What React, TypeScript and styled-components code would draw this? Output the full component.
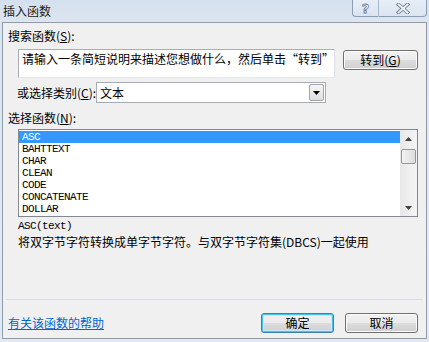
import React from 'react';
import styled, { createGlobalStyle, css } from 'styled-components';

const cjk = `"Noto Sans CJK SC", "Liberation Sans", sans-serif`;
const mono = `"Liberation Mono", "Noto Sans CJK SC", monospace`;

const GlobalStyle = createGlobalStyle`
    html, body {
        margin: 0;
        padding: 0;
        overflow: hidden;
    }
    body {
        font-family: ${cjk};
        font-size: 12px;
        color: #000;
    }
`;

const Window = styled.div`
    width: 429px;
    height: 342px;
    box-sizing: border-box;
    padding: 0 2px 3px 2px;
    display: flex;
    flex-direction: column;
    background: linear-gradient(to bottom, #d5e0ee 0px, #dce5f0 22px, #e2e9f2 100%);
`;

const TitleBar = styled.div`
    height: 22px;
    display: flex;
    align-items: flex-start;
`;

const Title = styled.div`
    margin: 3px 0 0 1px;
    line-height: 16px;
    font-size: 12px;
    color: #1b1b1b;
`;

const Captions = styled.div`
    margin-left: auto;
    display: flex;
`;

const CaptionButton = styled.div<{ $width: number; $first?: boolean }>`
    width: ${(p) => p.$width}px;
    height: 17px;
    box-sizing: border-box;
    border: 1px solid #8d9eb4;
    border-top: none;
    display: flex;
    align-items: center;
    justify-content: center;
    background: linear-gradient(to bottom, #e7eef7, #dbe5f1);
    ${(p) =>
        p.$first
            ? css`
                  border-right: 1px solid #a9b7c9;
                  border-bottom-left-radius: 4px;
              `
            : css`
                  border-left: none;
                  border-bottom-right-radius: 4px;
              `}
`;

const HelpGlyph = styled.span`
    font-family: "DejaVu Sans", sans-serif;
    font-weight: bold;
    font-size: 13px;
    line-height: 13px;
    color: #f4f7fb;
    -webkit-text-stroke: 0.8px #6d7d92;
`;

const Client = styled.div`
    flex: 1;
    display: flex;
    flex-direction: column;
    border: 1px solid #8f9cac;
    background: #f0f0f0;
    padding: 6px 0 5px 5px;
`;

const Label = styled.div<{ $indent?: number }>`
    height: 14px;
    line-height: 14px;
    padding-left: ${(p) => p.$indent ?? 0}px;
    white-space: nowrap;
`;

const SearchRow = styled.div`
    margin-top: 6px;
    padding-left: 10px;
    display: flex;
    align-items: flex-start;
`;

const SearchBox = styled.div`
    width: 317px;
    height: 29px;
    box-sizing: border-box;
    border: 1px solid #abadb3;
    border-right-color: #dbdfe6;
    border-bottom-color: #e3e9ef;
    background: #fff;
    padding: 1px 3px;
    line-height: 16px;
    white-space: nowrap;
    overflow: hidden;
`;

const Button = styled.div<{ $default?: boolean }>`
    width: 73px;
    height: 20px;
    box-sizing: border-box;
    border: 1px solid #707070;
    border-radius: 3px;
    display: flex;
    align-items: center;
    justify-content: center;
    line-height: 14px;
    background: linear-gradient(to bottom, #f2f2f2 0%, #ebebeb 48%, #dddddd 52%, #cfcfcf 100%);
    box-shadow: inset 0 0 0 1px #fcfcfc;
    ${(p) =>
        p.$default &&
        css`
            border-color: #3c7fb1;
            box-shadow: inset 0 0 0 1px #48c2f4, inset 0 0 0 2px #c6eafb;
        `}
`;

const GoButton = styled(Button)`
    width: 75px;
    margin: 1px 0 0 8px;
`;

const CategoryRow = styled.div`
    margin-top: 4px;
    display: flex;
    align-items: center;
    height: 21px;
`;

const CategoryLabel = styled(Label)`
    width: 88px;
    box-sizing: border-box;
`;

const Select = styled.div`
    width: 230px;
    height: 21px;
    box-sizing: border-box;
    border: 1px solid #a5acb5;
    background: #fff;
    display: flex;
    align-items: center;
    padding: 1px;
`;

const SelectValue = styled.div`
    flex: 1;
    padding-left: 2px;
    line-height: 16px;
`;

const ArrowButton = styled.div`
    width: 15px;
    height: 17px;
    box-sizing: border-box;
    border: 1px solid #9da5ae;
    border-radius: 2px;
    background: linear-gradient(to bottom, #f6f6f6, #dedede);
    display: flex;
    align-items: center;
    justify-content: center;
`;

const FunctionLabel = styled(Label)`
    margin-top: 8px;
`;

const ListBox = styled.div`
    margin: 4px 0 0 10px;
    width: 400px;
    height: 88px;
    box-sizing: border-box;
    border: 1px solid #828790;
    background: #fff;
    display: flex;
`;

const Items = styled.div`
    flex: 1;
    padding-top: 1px;
    overflow: hidden;
`;

const Item = styled.div<{ $selected?: boolean }>`
    height: 12px;
    line-height: 12px;
    padding-left: 3px;
    font-family: ${mono};
    font-size: 11px;
    letter-spacing: -0.6px;
    color: ${(p) => (p.$selected ? '#fff' : '#000')};
    background: ${(p) => (p.$selected ? '#3399ff' : 'transparent')};
`;

const ScrollBar = styled.div`
    width: 17px;
    display: flex;
    flex-direction: column;
    align-items: center;
    background: linear-gradient(to right, #e8e8e8, #f4f4f4);
`;

const ScrollArrow = styled.div<{ $bottom?: boolean }>`
    height: 17px;
    width: 17px;
    display: flex;
    align-items: center;
    justify-content: center;
    margin-top: ${(p) => (p.$bottom ? 'auto' : '0')};
`;

const Thumb = styled.div`
    width: 15px;
    height: 15px;
    margin-top: 2px;
    box-sizing: border-box;
    border: 1px solid #979797;
    border-radius: 2px;
    background: linear-gradient(to right, #f3f3f3, #dcdcdc);
`;

const Signature = styled.div`
    margin: 2px 0 0 10px;
    height: 14px;
    line-height: 14px;
    font-family: ${mono};
    font-size: 11px;
    letter-spacing: -0.6px;
`;

const Description = styled.div`
    margin: 2px 0 0 10px;
    height: 14px;
    line-height: 14px;
    white-space: nowrap;
`;

const Separator = styled.div`
    margin: auto 3px 0 -2px;
    height: 1px;
    background: #d7dde4;
`;

const Footer = styled.div`
    margin-top: 13px;
    height: 20px;
    display: flex;
    align-items: center;
    padding-right: 8px;
`;

const HelpLink = styled.a`
    color: #0066cc;
    text-decoration: underline;
    line-height: 14px;
    cursor: pointer;
`;

const FooterButtons = styled.div`
    margin-left: auto;
    display: flex;
    gap: 11px;
`;

const Triangle: React.FC<{ down?: boolean; color?: string }> = ({ down, color = '#000' }) => (
    <svg width="7" height="4" viewBox="0 0 7 4">
        <path d={down ? 'M0 0 H7 L3.5 4 Z' : 'M0 4 H7 L3.5 0 Z'} fill={color} />
    </svg>
);

const CloseGlyph = () => (
    <svg width="14" height="11" viewBox="0 0 14 11">
        <path d="M2.5 1.5 L11.5 9.5 M11.5 1.5 L2.5 9.5" stroke="#6d7d92" strokeWidth="3.6" strokeLinecap="square" />
        <path d="M2.5 1.5 L11.5 9.5 M11.5 1.5 L2.5 9.5" stroke="#f4f7fb" strokeWidth="1.8" strokeLinecap="square" />
    </svg>
);

const functions = ['ASC', 'BAHTTEXT', 'CHAR', 'CLEAN', 'CODE', 'CONCATENATE', 'DOLLAR'];

export default function App() {
    return (
        <Window>
            <GlobalStyle />
            <TitleBar>
                <Title>插入函数</Title>
                <Captions>
                    <CaptionButton $width={27} $first>
                        <HelpGlyph>?</HelpGlyph>
                    </CaptionButton>
                    <CaptionButton $width={48}>
                        <CloseGlyph />
                    </CaptionButton>
                </Captions>
            </TitleBar>
            <Client>
                <Label>
                    搜索函数(<u>S</u>):
                </Label>
                <SearchRow>
                    <SearchBox>请输入一条简短说明来描述您想做什么，然后单击“转到”</SearchBox>
                    <GoButton>
                        转到(<u>G</u>)
                    </GoButton>
                </SearchRow>
                <CategoryRow>
                    <CategoryLabel $indent={9}>
                        或选择类别(<u>C</u>):
                    </CategoryLabel>
                    <Select>
                        <SelectValue>文本</SelectValue>
                        <ArrowButton>
                            <Triangle down />
                        </ArrowButton>
                    </Select>
                </CategoryRow>
                <FunctionLabel>
                    选择函数(<u>N</u>):
                </FunctionLabel>
                <ListBox>
                    <Items>
                        {functions.map((name, i) => (
                            <Item key={name} $selected={i === 0}>
                                {name}
                            </Item>
                        ))}
                    </Items>
                    <ScrollBar>
                        <ScrollArrow>
                            <Triangle color="#404040" />
                        </ScrollArrow>
                        <Thumb />
                        <ScrollArrow $bottom>
                            <Triangle down color="#404040" />
                        </ScrollArrow>
                    </ScrollBar>
                </ListBox>
                <Signature>ASC(text)</Signature>
                <Description>将双字节字符转换成单字节字符。与双字节字符集(DBCS)一起使用</Description>
                <Separator />
                <Footer>
                    <HelpLink>有关该函数的帮助</HelpLink>
                    <FooterButtons>
                        <Button $default>确定</Button>
                        <Button>取消</Button>
                    </FooterButtons>
                </Footer>
            </Client>
        </Window>
    );
}
